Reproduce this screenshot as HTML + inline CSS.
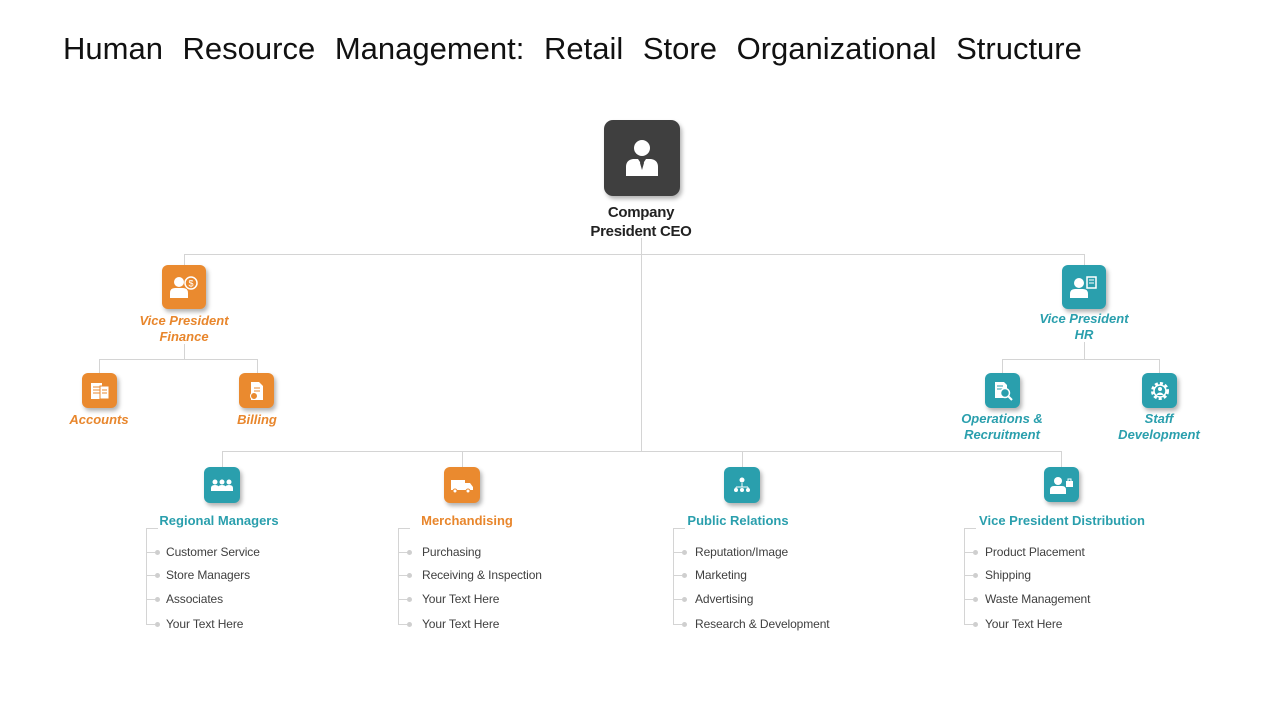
<!DOCTYPE html>
<html><head><meta charset="utf-8"><style>
body{margin:0;width:1280px;height:720px;background:#fff;position:relative;overflow:hidden;font-family:"Liberation Sans",Arial,sans-serif}
.a{position:absolute}
.t{left:63px;top:31px;font-size:31px;color:#111;word-spacing:11px;white-space:nowrap}
.ln{position:absolute;background:#d4d4d4}
.box{position:absolute;border-radius:6px;box-shadow:2px 3px 4px rgba(0,0,0,.3);display:flex;align-items:center;justify-content:center}
.o{background:#ea8a2f}.c{background:#2a9fad}
.lab{position:absolute;text-align:center;font-weight:bold;font-style:italic;font-size:13px;line-height:16px;white-space:nowrap;transform:translateX(-50%)}
.lo{color:#e8862c}.lc{color:#2a9fad}
.h{position:absolute;font-weight:bold;font-size:13px;white-space:nowrap;transform:translateX(-50%)}
.it{position:absolute;font-size:12px;color:#404040;white-space:nowrap;letter-spacing:-0.1px}
.dot{position:absolute;width:5px;height:5px;border-radius:50%;background:#cfcfcf}
</style></head><body>
<div class="a t">Human Resource Management: Retail Store Organizational Structure</div>

<div class="ln" style="left:641px;top:238px;width:1px;height:214px"></div>
<div class="ln" style="left:184px;top:254px;width:901px;height:1px"></div>
<div class="ln" style="left:184px;top:254px;width:1px;height:12px"></div>
<div class="ln" style="left:1084px;top:254px;width:1px;height:12px"></div>
<div class="ln" style="left:184px;top:344px;width:1px;height:15px"></div>
<div class="ln" style="left:99px;top:359px;width:159px;height:1px"></div>
<div class="ln" style="left:99px;top:359px;width:1px;height:15px"></div>
<div class="ln" style="left:257px;top:359px;width:1px;height:15px"></div>
<div class="ln" style="left:1084px;top:342px;width:1px;height:17px"></div>
<div class="ln" style="left:1002px;top:359px;width:158px;height:1px"></div>
<div class="ln" style="left:1002px;top:359px;width:1px;height:15px"></div>
<div class="ln" style="left:1159px;top:359px;width:1px;height:15px"></div>
<div class="ln" style="left:222px;top:451px;width:840px;height:1px"></div>
<div class="ln" style="left:222px;top:451px;width:1px;height:16px"></div>
<div class="ln" style="left:462px;top:451px;width:1px;height:16px"></div>
<div class="ln" style="left:742px;top:451px;width:1px;height:16px"></div>
<div class="ln" style="left:1061px;top:451px;width:1px;height:16px"></div>

<div class="box" style="left:604px;top:120px;width:76px;height:76px;background:#3f3f3f;border-radius:9px">
<svg width="34" height="40" viewBox="0 0 34 40"><circle cx="17" cy="10" r="8" fill="#fff"/><path d="M1 38 V29 Q1 22 8 21 L13 21 L17 27 L21 21 L26 21 Q33 22 33 29 V38Z" fill="#fff"/><path d="M16 22 h2 l1 3 -2 7 -2 -7z" fill="#3f3f3f"/></svg></div>
<div class="a" style="left:560px;width:162px;top:203px;text-align:center;font-weight:bold;font-size:15px;line-height:19px;color:#222;letter-spacing:-0.3px">Company<br>President CEO</div>

<div class="box o" style="left:162px;top:265px;width:44px;height:44px"><svg width="28" height="22" viewBox="0 0 28 22"><circle cx="9" cy="6" r="5" fill="#fff"/><path d="M0 22 V17 Q0 12 5 12 H13 Q18 12 18 17 V22Z" fill="#fff"/><circle cx="21" cy="7" r="6" fill="none" stroke="#fff" stroke-width="1.5"/><text x="21" y="10.5" font-size="9" fill="#fff" text-anchor="middle" font-family="Liberation Sans">$</text></svg></div>
<div class="lab lo" style="left:184px;top:313px">Vice President<br>Finance</div>
<div class="box o" style="left:82px;top:373px;width:35px;height:35px"><svg width="20" height="18" viewBox="0 0 20 18"><rect x="1" y="1" width="11" height="16" fill="#fff"/><rect x="10" y="4" width="9" height="13" fill="#fff" stroke="#ea8a2f"/><path d="M3 5h7M3 8h7M3 11h7M12 8h5M12 11h5" stroke="#ea8a2f"/></svg></div>
<div class="lab lo" style="left:99px;top:412px">Accounts</div>
<div class="box o" style="left:239px;top:373px;width:35px;height:35px"><svg width="16" height="20" viewBox="0 0 16 20"><path d="M2 1h8l4 4v14H2z" fill="#fff"/><path d="M5 7h6M5 10h6" stroke="#ea8a2f"/><circle cx="5" cy="15" r="3.5" fill="#ea8a2f" stroke="#fff"/></svg></div>
<div class="lab lo" style="left:257px;top:412px">Billing</div>

<div class="box c" style="left:1062px;top:265px;width:44px;height:44px"><svg width="28" height="22" viewBox="0 0 28 22"><circle cx="9" cy="7" r="5" fill="#fff"/><path d="M0 22 V18 Q0 13 5 13 H13 Q18 13 18 18 V22Z" fill="#fff"/><rect x="17" y="1" width="9" height="11" fill="none" stroke="#fff" stroke-width="1.5"/><path d="M19 4h5M19 7h5" stroke="#fff"/></svg></div>
<div class="lab lc" style="left:1084px;top:311px">Vice President<br>HR</div>
<div class="box c" style="left:985px;top:373px;width:35px;height:35px"><svg width="20" height="20" viewBox="0 0 20 20"><path d="M2 1h9l3 3v13H2z" fill="#fff"/><path d="M4 5h6M4 8h6" stroke="#2a9fad"/><circle cx="12" cy="12" r="4.5" fill="#2a9fad" stroke="#fff" stroke-width="1.5"/><path d="M15 15l4 4" stroke="#fff" stroke-width="2"/></svg></div>
<div class="lab lc" style="left:1002px;top:411px">Operations &amp;<br>Recruitment</div>
<div class="box c" style="left:1142px;top:373px;width:35px;height:35px"><svg width="22" height="22" viewBox="0 0 22 22"><circle cx="11" cy="11" r="7.5" fill="none" stroke="#fff" stroke-width="3" stroke-dasharray="3 2"/><circle cx="11" cy="11" r="6" fill="none" stroke="#fff" stroke-width="1.5"/><circle cx="11" cy="9" r="2" fill="#fff"/><path d="M7 15q4-5 8 0z" fill="#fff"/></svg></div>
<div class="lab lc" style="left:1159px;top:411px">Staff<br>Development</div>

<div class="box c" style="left:204px;top:467px;width:36px;height:36px"><svg width="24" height="14" viewBox="0 0 24 14"><circle cx="5" cy="4" r="2.5" fill="#fff"/><circle cx="12" cy="4" r="2.5" fill="#fff"/><circle cx="19" cy="4" r="2.5" fill="#fff"/><path d="M1 13v-3q0-3 4-3t4 3v3zM8 13v-3q0-3 4-3t4 3v3zM15 13v-3q0-3 4-3t4 3v3z" fill="#fff"/></svg></div>
<div class="h lc" style="left:219px;top:513px">Regional Managers</div>
<div class="box o" style="left:444px;top:467px;width:36px;height:36px"><svg width="24" height="16" viewBox="0 0 24 16"><path d="M1 3h14v10H1zM15 6h5l3 4v3h-8z" fill="#fff"/><circle cx="5" cy="14" r="2" fill="#fff" stroke="#ea8a2f"/><circle cx="18" cy="14" r="2" fill="#fff" stroke="#ea8a2f"/></svg></div>
<div class="h lo" style="left:467px;top:513px">Merchandising</div>
<div class="box c" style="left:724px;top:467px;width:36px;height:36px"><svg width="20" height="18" viewBox="0 0 20 18"><circle cx="10" cy="4" r="2.5" fill="#fff"/><path d="M10 7v4M4 11h12M4 11v2M16 11v2" stroke="#fff"/><circle cx="4" cy="14" r="2" fill="#fff"/><circle cx="16" cy="14" r="2" fill="#fff"/><circle cx="10" cy="14" r="2" fill="#fff"/></svg></div>
<div class="h lc" style="left:738px;top:513px">Public Relations</div>
<div class="box c" style="left:1044px;top:467px;width:35px;height:35px"><svg width="24" height="18" viewBox="0 0 24 18"><circle cx="8" cy="5" r="4" fill="#fff"/><path d="M0 18v-4q0-4 4-4h8q4 0 4 4v4z" fill="#fff"/><rect x="16" y="5" width="7" height="6" fill="#fff"/><path d="M18 5v-2h3v2" stroke="#fff" fill="none"/></svg></div>
<div class="h lc" style="left:1062px;top:513px">Vice President Distribution</div>

<div class="ln" style="left:146px;top:528px;width:1px;height:97px"></div><div class="ln" style="left:146px;top:528px;width:12px;height:1px"></div>
<div class="ln" style="left:398px;top:528px;width:1px;height:97px"></div><div class="ln" style="left:398px;top:528px;width:12px;height:1px"></div>
<div class="ln" style="left:673px;top:528px;width:1px;height:97px"></div><div class="ln" style="left:673px;top:528px;width:12px;height:1px"></div>
<div class="ln" style="left:964px;top:528px;width:1px;height:97px"></div><div class="ln" style="left:964px;top:528px;width:12px;height:1px"></div>

<div id="lists"></div>
<script>
var cols=[[146,166,["Customer Service","Store Managers","Associates","Your Text Here"]],[398,422,["Purchasing","Receiving & Inspection","Your Text Here","Your Text Here"]],[673,695,["Reputation/Image","Marketing","Advertising","Research & Development"]],[964,985,["Product Placement","Shipping","Waste Management","Your Text Here"]]];
var ys=[552,575,599,624],h="";
cols.forEach(function(c){c[2].forEach(function(t,i){var y=ys[i];
h+='<div class="ln" style="left:'+c[0]+'px;top:'+y+'px;width:9px;height:1px"></div>';
h+='<div class="dot" style="left:'+(c[0]+9)+'px;top:'+(y-2)+'px"></div>';
h+='<div class="it" style="left:'+c[1]+'px;top:'+(y-7)+'px">'+t.replace("&","&amp;")+'</div>';});});
document.getElementById("lists").innerHTML=h;
</script>
</body></html>
